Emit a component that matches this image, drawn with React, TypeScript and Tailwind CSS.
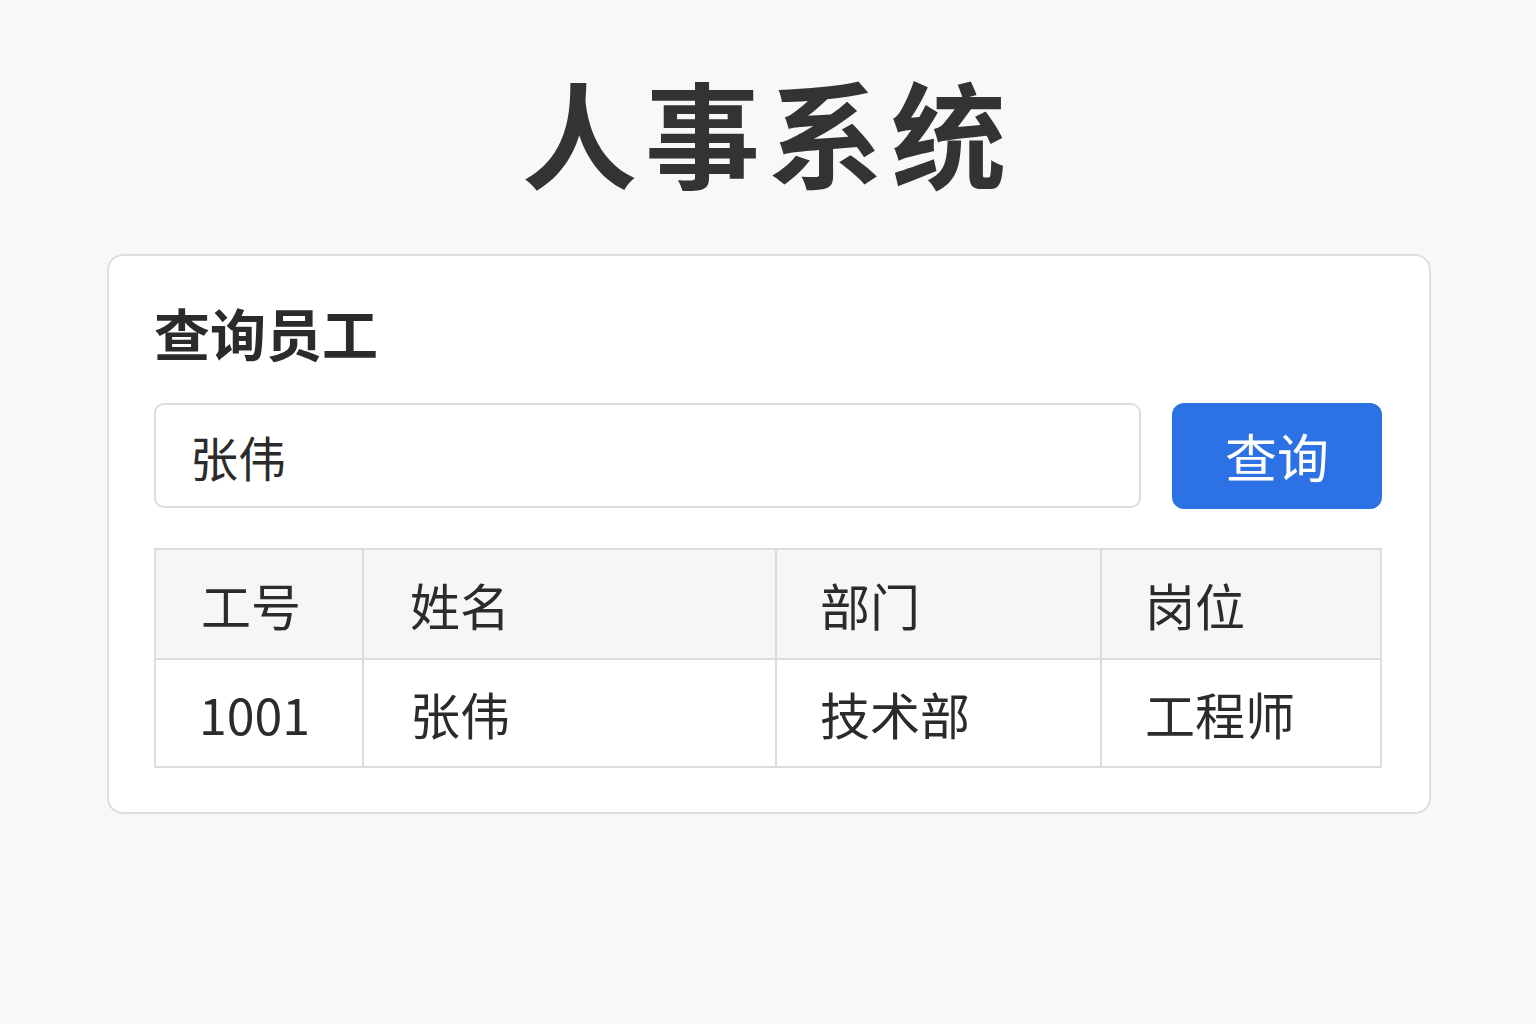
import React from 'react';

const rows = [{ id: '1001', name: '张伟', dept: '技术部', title: '工程师' }];

export default function App() {
  return (
    <div
      className="min-h-screen w-full bg-[#f8f8f7] text-[#2b2b2b] flex flex-col items-center"
      style={{ fontFamily: '"Noto Sans CJK SC", "Noto Sans", sans-serif' }}
    >
      <h1 className="mt-[55px] text-[115px] font-bold leading-[150px] tracking-[8px] text-[#333]">人事系统</h1>

      <div className="mt-[49px] ml-[2px] w-[1324px] rounded-[16px] border-2 border-[#dedede] bg-white pl-[45px] pr-[47px] pt-[38px] pb-[44px]">
        <h2 className="text-[56px] font-bold leading-[76px] text-[#2b2b2b]">查询员工</h2>

        <div className="mt-[33px] flex gap-[31px]">
          <div className="flex h-[105px] flex-1 items-center rounded-[10px] border-2 border-[#dcdcdc] bg-white px-[34px]">
            <span className="text-[48px] leading-none text-[#2b2b2b]">张伟</span>
          </div>
          <button className="h-[106px] w-[210px] rounded-[12px] bg-[#2d72e4] text-[52px] leading-none text-white">
            查询
          </button>
        </div>

        <table className="mt-[39px] w-full border-collapse border-2 border-[#dcdcdc] text-[50px] text-[#2b2b2b]">
          <thead>
            <tr className="h-[110px] bg-[#f6f6f5]">
              <th className="w-[208px] border-2 border-[#dcdcdc] pl-[45px] text-left font-normal">工号</th>
              <th className="w-[413px] border-2 border-[#dcdcdc] pl-[46px] text-left font-normal">姓名</th>
              <th className="w-[325px] border-2 border-[#dcdcdc] pl-[43px] text-left font-normal">部门</th>
              <th className="border-2 border-[#dcdcdc] pl-[43px] text-left font-normal">岗位</th>
            </tr>
          </thead>
          <tbody>
            {rows.map((r) => (
              <tr key={r.id} className="h-[108px] bg-white">
                <td className="border-2 border-[#dcdcdc] pl-[43px]">{r.id}</td>
                <td className="border-2 border-[#dcdcdc] pl-[46px]">{r.name}</td>
                <td className="border-2 border-[#dcdcdc] pl-[43px]">{r.dept}</td>
                <td className="border-2 border-[#dcdcdc] pl-[43px]">{r.title}</td>
              </tr>
            ))}
          </tbody>
        </table>
      </div>
    </div>
  );
}
